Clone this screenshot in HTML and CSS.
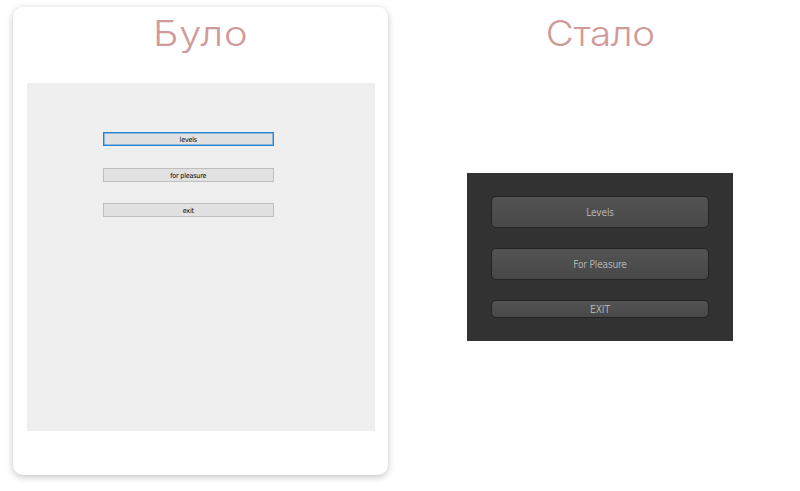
FILE: index.html
```html
<!DOCTYPE html>
<html lang="uk">
<head>
<meta charset="utf-8">
<title>Було / Стало</title>
<link rel="stylesheet" href="styles.css">
</head>
<body>
<main class="compare">
  <section class="card">
    <h1 class="title before-title">Було</h1>
    <div class="old-window">
      <button class="old-button focused">levels</button>
      <button class="old-button">for pleasure</button>
      <button class="old-button">exit</button>
    </div>
  </section>
  <section class="after">
    <h1 class="title after-title">Стало</h1>
    <div class="new-window">
      <button class="new-button">Levels</button>
      <button class="new-button">For Pleasure</button>
      <button class="new-button short">EXIT</button>
    </div>
  </section>
</main>
</body>
</html>
```

FILE: styles.css
```css
* { box-sizing: border-box; }
body { margin: 0; background: #fff; overflow: hidden; }
.compare { display: flex; height: 491px; padding: 7px 13px; gap: 25px; }
.card { width: 375px; height: 468px; padding: 0 13px 0 14px; border-radius: 10px; background: #fff; box-shadow: 0 2px 7px rgba(0,0,0,.24); }
.title { margin: 0; height: 76px; padding-top: 3px; font: 300 35px/46px Inter, sans-serif; color: #d19a9a; text-align: center; }
.before-title { letter-spacing: .7px; transform: scaleX(1.14); }
.old-window { height: 348px; padding: 49px 101px 0 76px; display: flex; flex-direction: column; gap: 21.5px; background: #efefef; }
button { display: block; margin: 0; padding: 0; text-align: center; }
.old-button { height: 14px; border: 1px solid #bebebe; background: #e1e1e1; color: #000; font: 7px/12px "DejaVu Sans Condensed", "DejaVu Sans", sans-serif; letter-spacing: -.15px; padding-top: 1px; }
.old-button.focused { border: 1px solid #2583d3; box-shadow: inset 0 0 0 .5px #3a92dd; }
.after { width: 375px; }
.after-title { height: 166px; letter-spacing: -.4px; transform: scaleX(1.1); }
.new-window { width: 266px; height: 168px; margin-left: 54px; padding: 23px 24px; display: flex; flex-direction: column; gap: 20px; background: #323232; }
.new-button { height: 32px; flex: none; border: 1px solid #242424; border-radius: 5px; background: linear-gradient(#535353, #484848); color: #b1b1b1; font: 10px "DejaVu Sans Condensed", "DejaVu Sans", sans-serif; letter-spacing: -.15px; padding: 1px 0 0 1px; }
.new-button.short { height: 18px; letter-spacing: 0; }
```
